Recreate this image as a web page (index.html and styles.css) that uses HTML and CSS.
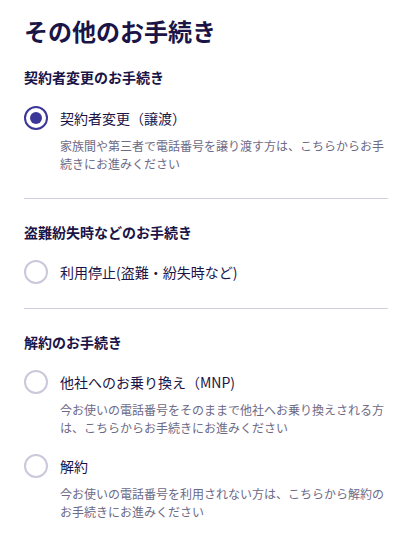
FILE: index.html
```html
<!DOCTYPE html>
<html lang="ja">
<head>
<meta charset="utf-8">
<link rel="stylesheet" href="styles.css">
</head>
<body>
<main class="page">
  <h1 class="title">その他のお手続き</h1>

  <section class="group group-first">
    <h2 class="group-title">契約者変更のお手続き</h2>
    <div class="option">
      <div class="option-row">
        <span class="radio radio-checked"></span>
        <span class="option-label">契約者変更（譲渡）</span>
      </div>
      <p class="option-desc">家族間や第三者で電話番号を譲り渡す方は、こちらからお手続きにお進みください</p>
    </div>
  </section>

  <section class="group">
    <h2 class="group-title">盗難紛失時などのお手続き</h2>
    <div class="option">
      <div class="option-row">
        <span class="radio"></span>
        <span class="option-label">利用停止(盗難・紛失時など)</span>
      </div>
    </div>
  </section>

  <section class="group group-last">
    <h2 class="group-title">解約のお手続き</h2>
    <div class="option">
      <div class="option-row">
        <span class="radio"></span>
        <span class="option-label">他社へのお乗り換え（MNP)</span>
      </div>
      <p class="option-desc">今お使いの電話番号をそのままで他社へお乗り換えされる方は、こちらからお手続きにお進みください</p>
    </div>
    <div class="option">
      <div class="option-row">
        <span class="radio"></span>
        <span class="option-label">解約</span>
      </div>
      <p class="option-desc">今お使いの電話番号を利用されない方は、こちらから解約のお手続きにお進みください</p>
    </div>
  </section>
</main>
</body>
</html>
```

FILE: styles.css
```css
* { box-sizing: border-box; }
html, body { margin: 0; padding: 0; background: #ffffff; }
body {
  font-family: "Noto Sans CJK JP", "Noto Sans", sans-serif;
  color: #1b1446;
}
.page {
  padding: 17px 20px 0 24px;
}
.title {
  margin: 0;
  font-size: 24px;
  line-height: 28px;
  font-weight: 700;
  color: #1b1446;
}
.group {
  border-bottom: 1px solid #d2d0e0;
  padding: 23px 0 24px;
}
.group-first { padding-top: 22px; padding-bottom: 25px; }
.group-last { border-bottom: none; }
.group-title {
  margin: 0;
  font-size: 14px;
  line-height: 20px;
  font-weight: 700;
  color: #1b1446;
}
.option {
  margin-top: 18px;
}
.group-first .option { margin-top: 19px; }
.group-last .option + .option { margin-top: 17px; }
.option-row {
  display: flex;
  align-items: center;
  gap: 12px;
  height: 24px;
}
.radio {
  width: 24px;
  height: 24px;
  border-radius: 50%;
  border: 2px solid #cac8da;
  flex: none;
  display: flex;
  align-items: center;
  justify-content: center;
}
.radio-checked {
  border-color: #3b3799;
}
.radio-checked::after {
  content: "";
  width: 12px;
  height: 12px;
  border-radius: 50%;
  background: #3b3799;
}
.option-label {
  font-size: 14px;
  line-height: 24px;
  color: #1b1446;
}
.option-desc {
  margin: 7px 0 0 36px;
  font-size: 12px;
  line-height: 18px;
  color: #6d6a86;
}
```
